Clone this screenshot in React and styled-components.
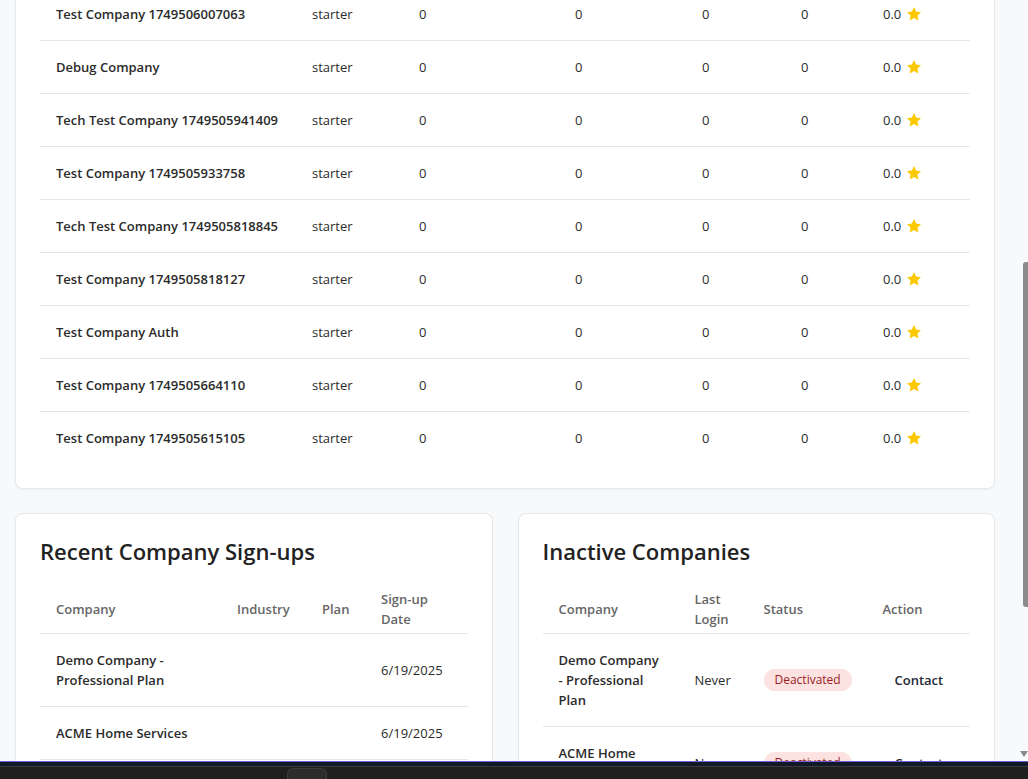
import React from 'react'
import styled, { createGlobalStyle } from 'styled-components'

const GlobalStyle = createGlobalStyle`
    html, body {
        margin:0;
        padding:0;
        overflow:hidden;
        background:#f8f9fa;
        font-family:"Segoe UI","Open Sans","Noto Sans",sans-serif;
        color:#2b2b2b;
    }
`;

const Page = styled.div`
    margin:-37px 0 0 0;
    padding:0 33px 0 15px;
    display:flex;
    flex-direction:column;
    gap:24px;
`;
const Card = styled.div`
    background:white;
    border:1px solid #e7e8ea;
    border-radius:8px;
    box-shadow:0 1px 3px rgba(0,0,0,0.04);
    padding:24px;
`;
const Columns = styled.div`
    display:grid;
    grid-template-columns:1fr 1fr;
    gap:25px;
`;
const Title = styled.h2`
    margin:0 0 16px 0;
    font-size:22px;
    font-weight:600;
    line-height:27px;
    color:#222;
`;
const Table = styled.table`
    width:100%;
    border-collapse:collapse;
    table-layout:fixed;
    font-size:13px;
`;
const Th = styled.th`
    text-align:left;
    vertical-align:middle;
    padding:8px 16px 4px 16px;
    line-height:20px;
    font-weight:600;
    color:#666;
    border-bottom:1px solid #e6e6e6;
`;
const Row = styled.tr`
    border-bottom:${p => p.$last ? 'none' : '1px solid #e6e6e6'};
`;
const Td = styled.td`
    padding:16px;
    line-height:20px;
    vertical-align:middle;
    font-weight:${p => p.$bold ? 600 : 400};
    color:#2b2b2b;
`;
const Rating = styled.span`
    display:inline-flex;
    align-items:center;
    gap:5px;
`;
const Badge = styled.span`
    display:inline-block;
    padding:1px 11px;
    border-radius:11px;
    background:#fde2e2;
    color:#9b1c1c;
    font-size:12px;
    font-weight:500;
    line-height:20px;
`;
const ContactButton = styled.button`
    background:none;
    border:none;
    padding:4px 12px;
    font-family:inherit;
    font-size:13px;
    font-weight:600;
    color:#1f2937;
    cursor:pointer;
`;
const Footer = styled.div`
    position:fixed;
    left:0;
    right:0;
    bottom:0;
    height:18px;
    display:flex;
    flex-direction:column;
`;
const FooterTop = styled.div`
    height:8px;
    background:#111827;
    border-top:1px solid #6e5fd9;
`;
const FooterBottom = styled.div`
    flex:1;
    background:#1f1f1f;
    border-top:1px solid #3b3b3b;
    padding-left:287px;
`;
const Pill = styled.div`
    width:38px;
    height:10px;
    margin-top:1px;
    border-radius:6px 6px 0 0;
    background:#2c2c2c;
    border:1px solid #3a3a3a;
    border-bottom:none;
`;
const ScrollThumb = styled.div`
    position:fixed;
    right:0;
    top:262px;
    width:5px;
    height:345px;
    background:#8b8b8b;
    border-radius:3px 0 0 3px;
`;
const ScrollArrow = styled.div`
    position:fixed;
    right:0;
    top:751px;
    width:0;
    height:0;
    border-left:4px solid transparent;
    border-right:4px solid transparent;
    border-top:6px solid #8b8b8b;
`;

function Star() {
  return (
    <svg width="16" height="16" viewBox="0 0 24 24">
      <path d="M12 1.5l3.2 6.7 7.3 1-5.3 5.1 1.3 7.3L12 18.1l-6.5 3.5 1.3-7.3-5.3-5.1 7.3-1z" fill="#fcc900"/>
    </svg>
  )
}

const companies = [
  'Test Company 1749506007063',
  'Debug Company',
  'Tech Test Company 1749505941409',
  'Test Company 1749505933758',
  'Tech Test Company 1749505818845',
  'Test Company 1749505818127',
  'Test Company Auth',
  'Test Company 1749505664110',
  'Test Company 1749505615105',
];

const signups = [
  { name: 'Demo Company - Professional Plan', industry: '', plan: '', date: '6/19/2025' },
  { name: 'ACME Home Services', industry: '', plan: '', date: '6/19/2025' },
  { name: 'Test Company 1749506007063', industry: '', plan: '', date: '6/9/2025' },
];

const inactive = [
  { name: 'Demo Company - Professional Plan', login: 'Never' },
  { name: 'ACME Home Services', login: 'Never' },
];

function App() {
  return (
    <>
      <GlobalStyle/>
      <Page>
        <Card>
          <Table>
            <colgroup>
              <col style={{ width: 256 }}/>
              <col style={{ width: 107 }}/>
              <col style={{ width: 156 }}/>
              <col style={{ width: 127 }}/>
              <col style={{ width: 99 }}/>
              <col style={{ width: 82 }}/>
              <col/>
            </colgroup>
            <tbody>
              {companies.map((name, i) => (
                <Row key={name} $last={i === companies.length - 1}>
                  <Td $bold>{name}</Td>
                  <Td>starter</Td>
                  <Td>0</Td>
                  <Td>0</Td>
                  <Td>0</Td>
                  <Td>0</Td>
                  <Td><Rating>0.0 <Star/></Rating></Td>
                </Row>
              ))}
            </tbody>
          </Table>
        </Card>
        <Columns>
          <Card>
            <Title>Recent Company Sign-ups</Title>
            <Table>
              <colgroup>
                <col style={{ width: 181 }}/>
                <col style={{ width: 85 }}/>
                <col style={{ width: 59 }}/>
                <col/>
              </colgroup>
              <thead>
                <tr>
                  <Th>Company</Th>
                  <Th>Industry</Th>
                  <Th>Plan</Th>
                  <Th>Sign-up Date</Th>
                </tr>
              </thead>
              <tbody>
                {signups.map(s => (
                  <Row key={s.name}>
                    <Td $bold>{s.name}</Td>
                    <Td>{s.industry}</Td>
                    <Td>{s.plan}</Td>
                    <Td>{s.date}</Td>
                  </Row>
                ))}
              </tbody>
            </Table>
          </Card>
          <Card>
            <Title>Inactive Companies</Title>
            <Table>
              <colgroup>
                <col style={{ width: 136 }}/>
                <col style={{ width: 69 }}/>
                <col style={{ width: 119 }}/>
                <col/>
              </colgroup>
              <thead>
                <tr>
                  <Th>Company</Th>
                  <Th>Last Login</Th>
                  <Th>Status</Th>
                  <Th>Action</Th>
                </tr>
              </thead>
              <tbody>
                {inactive.map(c => (
                  <Row key={c.name}>
                    <Td $bold>{c.name}</Td>
                    <Td>{c.login}</Td>
                    <Td><Badge>Deactivated</Badge></Td>
                    <Td><ContactButton>Contact</ContactButton></Td>
                  </Row>
                ))}
              </tbody>
            </Table>
          </Card>
        </Columns>
      </Page>
      <ScrollThumb/>
      <ScrollArrow/>
      <Footer>
        <FooterTop/>
        <FooterBottom><Pill/></FooterBottom>
      </Footer>
    </>
  )
}

export default App
